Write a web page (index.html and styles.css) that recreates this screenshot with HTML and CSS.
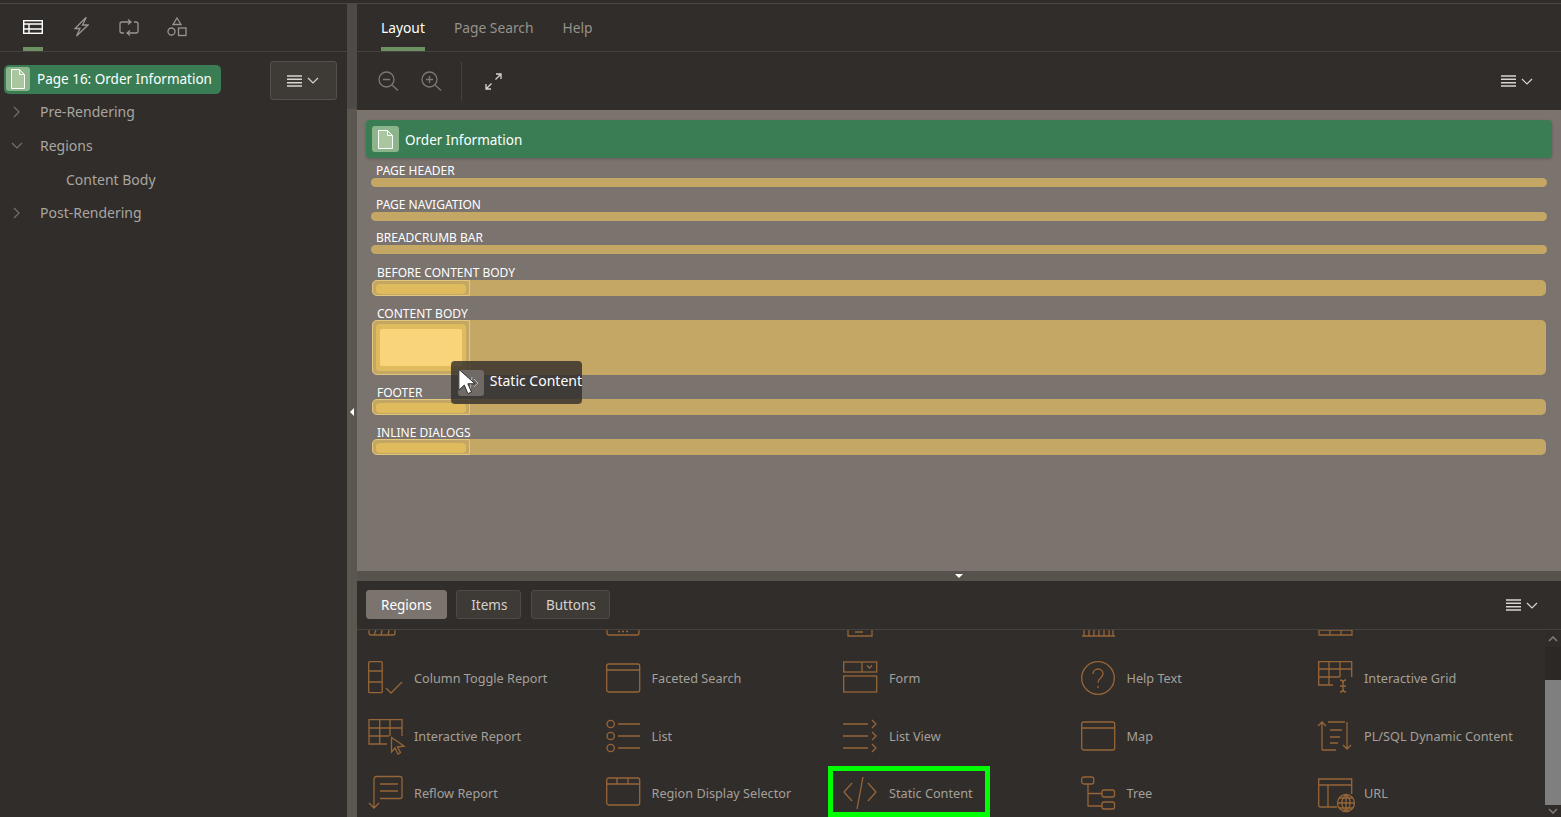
FILE: index.html
```html
<!DOCTYPE html>
<html lang="en">
<head>
  <meta charset="UTF-8">
  <meta name="viewport" content="width=device-width, initial-scale=1.0">
  <title>Page Designer</title>
  <link rel="stylesheet" href="styles.css">
</head>
<body>

<div class="shell">
  <!-- left tree panel -->
  <aside class="leftPanel">
    <div class="tabBar iconTabs">
      <a class="iconTab active">
        <svg width="20" height="14" viewBox="0 0 20 14" fill="none" stroke="#fff" stroke-width="1.4"><rect x=".7" y=".7" width="18.6" height="12.6"/><path d="M.7 4h18.600M.7 9h18.600M6 4v9.300"/></svg>
      </a>
      <a class="iconTab">
        <svg width="16" height="20" viewBox="0 0 16 20" fill="none" stroke="#99958f" stroke-width="1.3"><path d="M12.500 1 2 11.500h5L3.500 19 15 8H9.500L13 1z"/></svg>
      </a>
      <a class="iconTab">
        <svg width="20" height="17" viewBox="0 0 20 17" fill="none" stroke="#99958f" stroke-width="1.3"><path d="M1 11V5a2 2 0 0 1 2-2h9M9 .5 12 3 9 5.500M15 3h2a2 2 0 0 1 2 2v7a2 2 0 0 1-2 2H8M11 11.500 8 14l3 2.500M1 11v1a2 2 0 0 0 2 2h2"/></svg>
      </a>
      <a class="iconTab">
        <svg width="20" height="20" viewBox="0 0 20 20" fill="none" stroke="#99958f" stroke-width="1.3"><path d="M10 1l4 6.500H6z"/><circle cx="4.500" cy="14.500" r="3.500"/><rect x="11.500" y="11" width="7.500" height="7.500"/></svg>
      </a>
    </div>
    <div class="treeArea">
      <ul class="tree">
        <li class="treeRoot">
          <span class="pageBadge">
            <span class="badgeIcon">
              <svg width="14" height="20" viewBox="0 0 14 20" fill="#a9c79f" stroke="#fff" stroke-width="1"><path d="M.5.5h8l5 5v14H.5z"/><path d="M8.500.5v5h5" fill="none"/></svg>
            </span>
            Page 16: Order Information
          </span>
        </li>
        <li class="treeRow">
          <svg class="twisty" width="8" height="12" viewBox="0 0 8 12" fill="none" stroke="#75706a" stroke-width="1.200"><path d="M1 1l5 5-5 5"/></svg>
          Pre-Rendering
        </li>
        <li class="treeRow">
          <svg class="twisty" width="12" height="8" viewBox="0 0 12 8" fill="none" stroke="#75706a" stroke-width="1.200"><path d="M1 1l5 5 5-5"/></svg>
          Regions
        </li>
        <li class="treeRow child">Content Body</li>
        <li class="treeRow">
          <svg class="twisty" width="8" height="12" viewBox="0 0 8 12" fill="none" stroke="#75706a" stroke-width="1.200"><path d="M1 1l5 5-5 5"/></svg>
          Post-Rendering
        </li>
      </ul>
      <button class="menuBtn">
        <svg width="15" height="12" viewBox="0 0 15 12" fill="none" stroke="#d8d5d0" stroke-width="1.400"><path d="M0 1h15M0 4.300h15M0 7.700h15M0 11h15"/></svg>
        <svg width="12" height="7" viewBox="0 0 12 7" fill="none" stroke="#d8d5d0" stroke-width="1.200"><path d="M1 1l5 5 5-5"/></svg>
      </button>
    </div>
  </aside>

  <div class="vSplitter"><span class="splitArrow"></span></div>

  <main class="rightPanel">
    <div class="tabBar textTabs">
      <a class="textTab active">Layout</a>
      <a class="textTab">Page Search</a>
      <a class="textTab">Help</a>
    </div>

    <div class="toolbar">
      <svg width="21" height="20" viewBox="0 0 21 20" fill="none" stroke="#7d7872" stroke-width="1.300"><circle cx="8.500" cy="8.500" r="7.500"/><path d="M14 14l6 5.500M5 8.500h7"/></svg>
      <svg class="zoomIn" width="21" height="20" viewBox="0 0 21 20" fill="none" stroke="#7d7872" stroke-width="1.300"><circle cx="8.500" cy="8.500" r="7.500"/><path d="M14 14l6 5.500M5 8.500h7M8.500 5v7"/></svg>
      <span class="toolSep"></span>
      <svg width="17" height="17" viewBox="0 0 17 17" fill="none" stroke="#d8d5d0" stroke-width="1.300"><path d="M1 16l5.500-5.500M10.500 6.500 16 1M11 1h5v5M1 11v5h5"/></svg>
      <button class="lineMenu toolMenu">
        <svg width="15" height="12" viewBox="0 0 15 12" fill="none" stroke="#d8d5d0" stroke-width="1.400"><path d="M0 1h15M0 4.300h15M0 7.700h15M0 11h15"/></svg>
        <svg width="12" height="7" viewBox="0 0 12 7" fill="none" stroke="#d8d5d0" stroke-width="1.200"><path d="M1 1l5 5 5-5"/></svg>
      </button>
    </div>

    <!-- page layout canvas -->
    <section class="canvas">
      <div class="pageTitle">
        <span class="badgeIcon big">
          <svg width="15" height="19" viewBox="0 0 15 19" fill="#a9c79f" stroke="#fff" stroke-width="1"><path d="M.5.5h9l5 5v13H.5z"/><path d="M9.500.5v5h5" fill="none"/></svg>
        </span>
        Order Information
      </div>

      <div class="slot first">
        <div class="slotLabel">PAGE HEADER</div>
        <div class="thinBar"></div>
      </div>
      <div class="slot">
        <div class="slotLabel">PAGE NAVIGATION</div>
        <div class="thinBar"></div>
      </div>
      <div class="slot">
        <div class="slotLabel">BREADCRUMB BAR</div>
        <div class="thinBar"></div>
      </div>
      <div class="slot grid">
        <div class="slotLabel">BEFORE CONTENT BODY</div>
        <div class="dropBar"><div class="cell"><span class="cellFill"></span></div></div>
      </div>
      <div class="slot grid">
        <div class="slotLabel">CONTENT BODY</div>
        <div class="dropBar tall"><div class="cell"><span class="cellFill"><span class="hotSpot"></span></span></div></div>
      </div>
      <div class="slot grid">
        <div class="slotLabel">FOOTER</div>
        <div class="dropBar"><div class="cell"><span class="cellFill"></span></div></div>
      </div>
      <div class="slot grid">
        <div class="slotLabel">INLINE DIALOGS</div>
        <div class="dropBar"><div class="cell"><span class="cellFill"></span></div></div>
      </div>

      <!-- component being dragged -->
      <div class="dragHelper">
        <span class="dragIcon">
          <svg width="16" height="14" viewBox="0 0 16 14" fill="none" stroke="#b9b5af" stroke-width="1"><path d="M5 3 1 7l4 4M11 3l4 4-4 4M9 1 7 13"/></svg>
        </span>
        Static Content
      </div>
      <svg class="cursor" width="18" height="27" viewBox="0 0 20 29"><path d="M1 1v23l6-5.500 4 9.500 4-1.700-4-9.300h8z" fill="#fff" stroke="#222" stroke-width="1"/></svg>
    </section>

    <div class="hSplitter"><span class="splitArrowDown"></span></div>

    <!-- component gallery -->
    <section class="gallery">
      <div class="galleryTabs">
        <a class="pill active">Regions</a>
        <a class="pill">Items</a>
        <a class="pill">Buttons</a>
        <button class="lineMenu">
          <svg width="15" height="12" viewBox="0 0 15 12" fill="none" stroke="#d8d5d0" stroke-width="1.400"><path d="M0 1h15M0 4.300h15M0 7.700h15M0 11h15"/></svg>
          <svg width="12" height="7" viewBox="0 0 12 7" fill="none" stroke="#d8d5d0" stroke-width="1.200"><path d="M1 1l5 5 5-5"/></svg>
        </button>
      </div>
      <div class="galleryBody">
        <div class="galleryScroll">
          <div class="galleryGrid">
            <div class="item"><svg class="ico" viewBox="0 0 34 34"><path d="M1 10v19a2 2 0 0 0 2 2h22a2 2 0 0 0 2-2V10M6 31l2-5M13 31l1-5M20 31l1-5"/></svg></div>
            <div class="item"><svg class="ico" viewBox="0 0 34 34"><path d="M1 10v19a2 2 0 0 0 2 2h28a2 2 0 0 0 2-2V10M12 27.500h2M16 27.500h2M20 27.500h2"/></svg></div>
            <div class="item"><svg class="ico" viewBox="0 0 34 34"><path d="M5 10v22h24V10M12 28h8"/></svg></div>
            <div class="item"><svg class="ico" viewBox="0 0 34 34"><path d="M1 32h33M3 26v6M8 26v6M13 26v6M18 26v6M23 26v6M28 26v6M32 26v6"/></svg></div>
            <div class="item"><svg class="ico" viewBox="0 0 34 34"><path d="M1 10v21h33V10M1 26h33M12 26v5M23 26v5"/></svg></div>

            <div class="item">
              <svg class="ico" viewBox="0 0 34 34"><rect x=".7" y=".7" width="13.500" height="31" rx="1"/><path d="M.7 10h13.500M.7 21h13.500M18 27l5 5 11-11"/></svg>
              Column Toggle Report
            </div>
            <div class="item">
              <svg class="ico" viewBox="0 0 34 34"><rect x=".7" y="3" width="33" height="28" rx="2"/><path d="M.7 9h33"/></svg>
              Faceted Search
            </div>
            <div class="item">
              <svg class="ico" viewBox="0 0 34 34"><rect x=".7" y="1" width="33" height="10"/><path d="M19 1v10M24 4.500l2.500 2.500L29 4.500"/><rect x=".7" y="15" width="33" height="16"/></svg>
              Form
            </div>
            <div class="item">
              <svg class="ico" viewBox="0 0 34 34"><circle cx="17" cy="17" r="16.300"/><path d="M12 13c0-3 2.200-5 5-5s5 2 5 4.700c0 4.300-5 4.300-5 9M17 25v2"/></svg>
              Help Text
            </div>
            <div class="item">
              <svg class="ico" viewBox="0 0 34 34"><path d="M15 24H.7V.7h33V16M.7 8h33M.7 16h21M11 .7V24M22 .7V16M22 19c2 0 3 1 3 3v6c0 2-1 3-3 3M28 19c-2 0-3 1-3 3v6c0 2 1 3 3 3M22 25h6"/></svg>
              Interactive Grid
            </div>

            <div class="item">
              <svg class="ico" viewBox="0 0 34 34"><path d="M19 25H1V.7h33V17M1 9h33M1 17h20M11.700.7V25M22 .7V17"/><path d="M23.500 18.500V33l3.500-4 3 6 2.500-1.500-3-5.500 6.500-1z"/></svg>
              Interactive Report
            </div>
            <div class="item">
              <svg class="ico" viewBox="0 0 34 34"><circle cx="4.700" cy="5" r="3.700"/><circle cx="4.700" cy="17" r="3.700"/><circle cx="4.700" cy="29" r="3.700"/><path d="M12 5h22M12 17h22M12 29h22"/></svg>
              List
            </div>
            <div class="item">
              <svg class="ico" viewBox="0 0 34 34"><path d="M0 5h25M0 17h25M0 29h25M29 1l4 4-4 4M29 13l4 4-4 4M29 25l4 4-4 4"/></svg>
              List View
            </div>
            <div class="item">
              <svg class="ico" viewBox="0 0 34 34"><rect x=".7" y="3" width="33" height="28" rx="2"/><path d="M.7 9h33"/></svg>
              Map
            </div>
            <div class="item">
              <svg class="ico" viewBox="0 0 34 34"><path d="M4 33V5M0 9l4-4 4 4M10 5h17M4 33h14M29 5v27M25 28l4 4 4-4M12 13h12M12 20h10M12 26h8" transform="translate(0 -2)"/></svg>
              PL/SQL Dynamic Content
            </div>

            <div class="item">
              <svg class="ico" viewBox="0 0 34 34"><path d="M6 32V3A2.500 2.500 0 0 1 8.500.5H32a2 2 0 0 1 2 2v18a2 2 0 0 1-2 2H12M12 8h18M12 15h18M1 27l5 5 5-5"/></svg>
              Reflow Report
            </div>
            <div class="item">
              <svg class="ico" viewBox="0 0 34 34"><rect x=".7" y="2" width="33" height="27" rx="2"/><path d="M.7 8h33M11 2v6M22 2v6"/></svg>
              Region Display Selector
            </div>
            <div class="item picked">
              <svg class="ico" viewBox="0 0 34 34"><path d="M9 7 1 16l8 9M25 7l8 9-8 9M20 1l-6 32"/></svg>
              Static Content
            </div>
            <div class="item">
              <svg class="ico" viewBox="0 0 34 34"><rect x=".7" y="1" width="12" height="7" rx="2"/><rect x="21" y="14" width="12.500" height="7" rx="2"/><rect x="21" y="26" width="12.500" height="7" rx="2"/><path d="M7 8v22h14M7 17.500h14"/></svg>
              Tree
            </div>
            <div class="item">
              <svg class="ico" viewBox="0 0 34 34"><path d="M19 31H2.500a1.800 1.800 0 0 1-1.800-1.800V3h33v15M.7 9h33M10 9v22"/><circle cx="28" cy="27" r="8.500"/><path d="M19.500 27h17M28 18.500v17M21 22h14M21 32h14M28 18.500c-5.500 5-5.500 12 0 17M28 18.500c5.500 5 5.500 12 0 17"/></svg>
              URL
            </div>
          </div>
        </div>
        <div class="scrollBar">
          <span class="scrollBtn">
            <svg width="10" height="6" viewBox="0 0 10 6" fill="none" stroke="#7c7c7c" stroke-width="1.600"><path d="M1 5l4-4 4 4"/></svg>
          </span>
          <span class="scrollThumb"></span>
          <span class="scrollBtn down">
            <svg width="10" height="6" viewBox="0 0 10 6" fill="none" stroke="#7c7c7c" stroke-width="1.600"><path d="M1 1l4 4 4-4"/></svg>
          </span>
        </div>
      </div>
    </section>
  </main>
</div>

</body>
</html>
```

FILE: styles.css
```css
* {
  box-sizing: border-box;
}

html, body {
  height: 100%;
}

body {
  margin: 0;
  overflow: hidden;
  background-color: #312d2a;
  color: #aaa7a2;
  font-family: "Noto Sans", "Open Sans", sans-serif;
  font-size: 13px;
}

button {
  font: inherit;
  background: none;
  border: none;
  padding: 0;
  cursor: pointer;
}

.shell {
  display: flex;
  height: 817px;
  padding-top: 3px;
  background-color: #312d2a;
}

.leftPanel {
  width: 347px;
  flex: none;
  border-top: 1px solid #4a4641;
}

.rightPanel {
  flex: 1;
  min-width: 0;
  display: flex;
  flex-direction: column;
  border-top: 1px solid #4a4641;
}

.tabBar {
  display: flex;
  height: 48px;
  border-bottom: 1px solid #45413c;
}

.iconTabs {
  padding-left: 23px;
  gap: 28px;
}

.iconTab {
  width: 20px;
  height: 47px;
  display: flex;
  align-items: center;
  justify-content: center;
  padding-bottom: 1px;
}

.iconTab.active {
  border-bottom: 4px solid #6d9162;
  padding-top: 3px;
}

.treeArea {
  display: flex;
  justify-content: space-between;
  padding: 9px 10px 0 4px;
}

.tree {
  list-style: none;
  margin: 0;
  padding: 0;
}

.treeRoot {
  height: 36.250px;
  padding-top: 4px;
}

.pageBadge {
  display: inline-flex;
  align-items: center;
  gap: 7px;
  height: 29px;
  width: 217px;
  padding: 0 0 1px 2px;
  border-radius: 5px;
  background-color: #3a7d54;
  color: #fff;
  font-size: 13.500px;
  white-space: nowrap;
}

.badgeIcon {
  width: 24px;
  height: 24px;
  flex: none;
  border-radius: 3px;
  background-color: #8db58c;
  display: inline-flex;
  align-items: center;
  justify-content: center;
}

.badgeIcon.big {
  width: 27px;
  height: 26px;
  margin-top: -1px;
}

.treeRow {
  position: relative;
  height: 33.700px;
  line-height: 30px;
  padding-left: 36px;
  font-size: 14px;
  color: #a9a6a1;
}

.treeRow.child {
  padding-left: 62px;
}

.twisty {
  position: absolute;
  top: 9px;
  left: 9px;
}

.treeRow:nth-child(3) .twisty {
  left: 7px;
  top: 11px;
}

.menuBtn {
  width: 67px;
  height: 39px;
  flex: none;
  display: flex;
  align-items: center;
  justify-content: center;
  gap: 5px;
  padding-right: 2px;
  border: 1px solid #55514b;
  border-radius: 3px;
  background-color: #3e3a36;
}

.vSplitter {
  position: relative;
  width: 10px;
  flex: none;
  background: linear-gradient(#4e4a45 106px, #5b5650 106px);
}

.splitArrow {
  position: absolute;
  top: 405px;
  left: 3px;
  border: 4px solid transparent;
  border-left: 0;
  border-right: 4px solid #fff;
}

.textTabs {
  padding-left: 24px;
  gap: 29px;
}

.textTab {
  height: 47px;
  line-height: 48px;
  font-size: 13.800px;
  color: #96928c;
}

.textTab.active {
  color: #fff;
  border-bottom: 4px solid #6d9162;
}

.toolbar {
  display: flex;
  align-items: center;
  height: 58px;
  padding-left: 21px;
  flex: none;
}

.zoomIn {
  margin-left: 22px;
}

.toolSep {
  width: 1px;
  height: 39px;
  margin: 0 23px 0 19px;
  background-color: #45413c;
}

.lineMenu {
  display: flex;
  align-items: center;
  gap: 5px;
  margin-left: auto;
}

.toolMenu {
  margin-right: 28px;
}

.canvas {
  position: relative;
  height: 461px;
  flex: none;
  padding: 10px 9px 0;
  background-color: #7b736e;
}

.pageTitle {
  display: flex;
  align-items: center;
  gap: 6px;
  height: 38px;
  padding: 1px 0 0 6px;
  border-radius: 4px;
  background-color: #3a7d54;
  color: #fff;
  font-size: 13.500px;
  box-shadow: 0 1px 3px rgba(0, 0, 0, 0.2);
}

.slot {
  padding: 0 5px;
  margin-top: 9.700px;
}

.slot.first {
  margin-top: 5px;
}

.slotLabel {
  height: 15px;
  line-height: 15px;
  padding-left: 5px;
  font-size: 12px;
  color: #fff;
}

.thinBar {
  height: 9px;
  border-radius: 5px;
  background-color: #c4a765;
}

.slot.grid {
  margin-top: 11px;
  padding: 0 6px;
}

.slot.grid + .slot.grid {
  margin-top: 9px;
}

.slot.grid + .slot.grid .slotLabel {
  line-height: 17px;
}

.dropBar {
  height: 16px;
  border-radius: 5px;
  background-color: #c4a765;
}

.dropBar.tall {
  height: 55px;
}

.cell {
  width: 98px;
  height: 100%;
  padding: 3px;
  border: 1px solid #e2c67c;
  border-radius: 5px 0 0 5px;
}

.cellFill {
  display: block;
  height: 100%;
  padding: 5px 4px;
  border-radius: 4px;
  background-color: #e0bb5d;
}

.hotSpot {
  display: block;
  height: 100%;
  background-color: #f9d47a;
  border-radius: 2px;
}

.dragHelper {
  position: absolute;
  top: 251px;
  left: 94px;
  width: 131px;
  height: 43px;
  display: flex;
  align-items: center;
  gap: 6px;
  padding: 0 0 5px 7px;
  border-radius: 4px;
  background-color: rgba(49, 45, 42, 0.8);
  color: #fff;
  font-size: 14px;
  white-space: nowrap;
}

.dragIcon {
  width: 26px;
  height: 26px;
  margin-top: 5px;
  border-radius: 3px;
  background-color: #6f6a65;
  display: inline-flex;
  align-items: center;
  justify-content: center;
}

.cursor {
  position: absolute;
  top: 258px;
  left: 101px;
}

.hSplitter {
  position: relative;
  height: 10px;
  flex: none;
  background-color: #57524c;
}

.splitArrowDown {
  position: absolute;
  top: 3px;
  left: 598px;
  border: 4px solid transparent;
  border-bottom: 0;
  border-top: 4px solid #fff;
}

.gallery {
  flex: 1;
  min-height: 0;
  display: flex;
  flex-direction: column;
}

.galleryTabs {
  height: 49px;
  flex: none;
  display: flex;
  align-items: center;
  gap: 9.500px;
  padding: 0 23px 2px 9px;
  border-bottom: 1px solid #45413c;
}

.galleryTabs .lineMenu {
  margin-top: 2px;
}

.pill {
  height: 29px;
  line-height: 28px;
  padding: 0 13px 0 14px;
  border: 1px solid #4e4a45;
  border-radius: 3px;
  background-color: #3e3a36;
  color: #d5d2cd;
  font-size: 13.500px;
}

.pill.active {
  padding-right: 14px;
  background-color: #7b736e;
  border-color: #7b736e;
  color: #fff;
}

.galleryBody {
  flex: 1;
  min-height: 0;
  display: flex;
}

.galleryScroll {
  flex: 1;
  min-width: 0;
  overflow: hidden;
}

.galleryGrid {
  display: grid;
  grid-template-columns: repeat(5, 237.500px);
  grid-auto-rows: 57.500px;
  margin-top: -38.200px;
}

.item {
  display: flex;
  align-items: center;
  gap: 12px;
  padding-left: 11px;
  font-size: 12.700px;
  color: #a3a09b;
  white-space: nowrap;
}

.ico {
  width: 34px;
  height: 34px;
  flex: none;
  fill: none;
  stroke: #966638;
  stroke-width: 1.300;
  overflow: visible;
}

.item.picked {
  width: 162px;
  height: 51px;
  margin: 1.200px 0 0 -4px;
  padding: 4px 0 0 10px;
  align-self: start;
  border: 5px solid #00ff00;
}

.scrollBar {
  width: 16px;
  flex: none;
  display: flex;
  flex-direction: column;
  background-color: #2b2826;
}

.scrollBtn {
  height: 17px;
  flex: none;
  display: flex;
  align-items: center;
  justify-content: center;
  background-color: #2f2c29;
}

.scrollThumb {
  height: 125px;
  flex: none;
  margin-top: 33px;
  background-color: #7f7f7f;
}

.scrollBtn.down {
  height: 12px;
}
```
